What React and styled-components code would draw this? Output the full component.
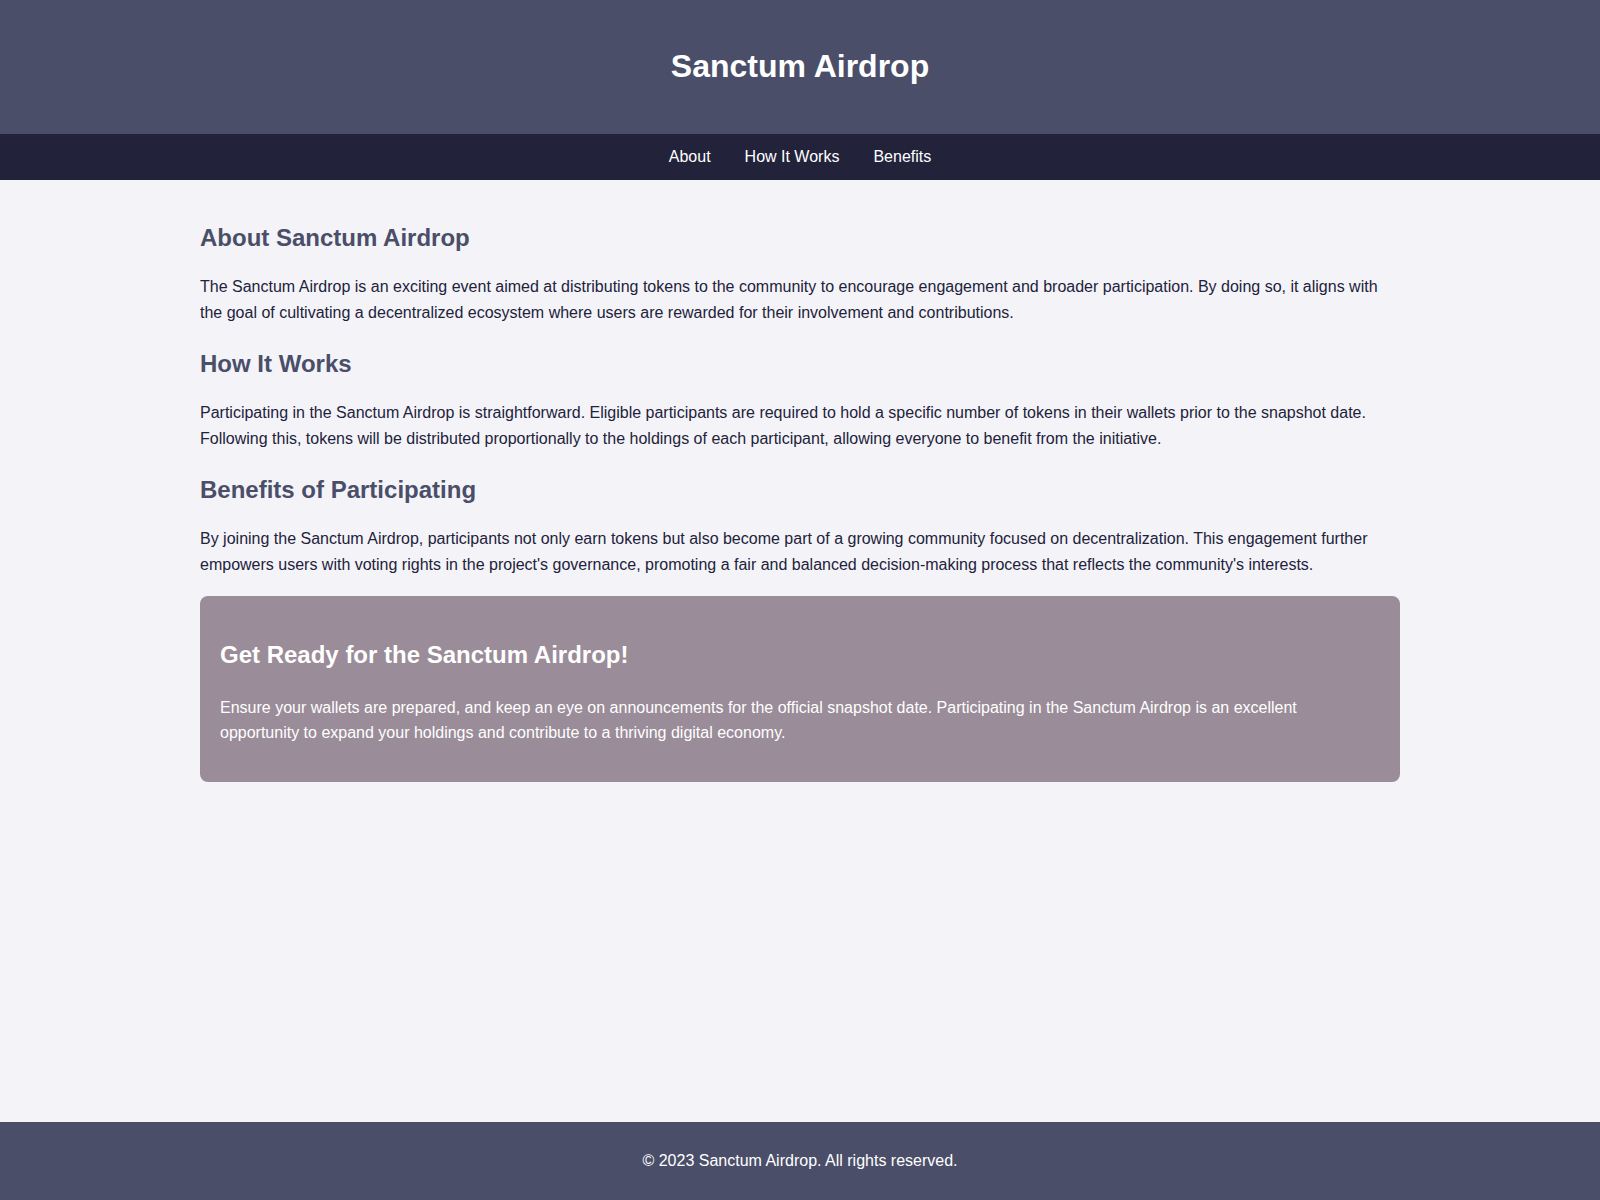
import React from "react";
import styled, { createGlobalStyle } from "styled-components";

const GlobalStyle = createGlobalStyle`
  * { box-sizing: border-box; }
  html, body { margin: 0; padding: 0; }
  body {
    background: #f4f4f8;
    color: #22223b;
    font-family: "Liberation Sans", Arial, sans-serif;
    font-size: 16px;
  }
`;

const Page = styled.div`
  min-height: 100vh;
  display: flex;
  flex-direction: column;
`;

const Header = styled.header`
  background: #4a4e69;
  height: 134px;
  padding-bottom: 2px;
  display: flex;
  align-items: center;
  justify-content: center;
`;

const Title = styled.h1`
  margin: 0;
  color: #ffffff;
  font-size: 32px;
  font-weight: bold;
  line-height: 1.15;
`;

const Nav = styled.nav`
  background: #22223b;
  height: 46px;
  display: flex;
  align-items: center;
  justify-content: center;
  gap: 34px;
`;

const NavLink = styled.a`
  color: #ffffff;
  text-decoration: none;
  font-size: 16px;
`;

const Main = styled.main`
  flex: 1;
  width: 100%;
  max-width: 1200px;
  margin: 0 auto;
  padding: 44px 0 40px;
`;

const Section = styled.section`
  margin-bottom: 25px;
  &:last-of-type { margin-bottom: 18px; }
`;

const Heading = styled.h2`
  margin: 0 0 22px;
  font-size: 24px;
  line-height: 28px;
  font-weight: bold;
  color: ${(p) => (p.$light ? "#ffffff" : "#4a4e69")};
`;

const Text = styled.p`
  margin: 0;
  font-size: 16px;
  line-height: 25.6px;
  color: ${(p) => (p.$light ? "#ffffff" : "#22223b")};
`;

const Callout = styled.div`
  background: #9a8c98;
  border-radius: 8px;
  padding: 45px 20px 36px;
  ${Heading} { margin-bottom: 26px; }
`;

const Footer = styled.footer`
  background: #4a4e69;
  height: 78px;
  display: flex;
  align-items: center;
  justify-content: center;
  color: #ffffff;
  font-size: 16px;
`;

const sections = [
  {
    id: "about",
    title: "About Sanctum Airdrop",
    body:
      "The Sanctum Airdrop is an exciting event aimed at distributing tokens to the community to encourage engagement and broader participation. By doing so, it aligns with the goal of cultivating a decentralized ecosystem where users are rewarded for their involvement and contributions.",
  },
  {
    id: "how",
    title: "How It Works",
    body:
      "Participating in the Sanctum Airdrop is straightforward. Eligible participants are required to hold a specific number of tokens in their wallets prior to the snapshot date. Following this, tokens will be distributed proportionally to the holdings of each participant, allowing everyone to benefit from the initiative.",
  },
  {
    id: "benefits",
    title: "Benefits of Participating",
    body:
      "By joining the Sanctum Airdrop, participants not only earn tokens but also become part of a growing community focused on decentralization. This engagement further empowers users with voting rights in the project's governance, promoting a fair and balanced decision-making process that reflects the community's interests.",
  },
];

export default function App() {
  return (
    <>
      <GlobalStyle />
      <Page>
        <Header>
          <Title>Sanctum Airdrop</Title>
        </Header>
        <Nav>
          <NavLink href="#about">About</NavLink>
          <NavLink href="#how">How It Works</NavLink>
          <NavLink href="#benefits">Benefits</NavLink>
        </Nav>
        <Main>
          {sections.map((s) => (
            <Section key={s.id} id={s.id}>
              <Heading>{s.title}</Heading>
              <Text>{s.body}</Text>
            </Section>
          ))}
          <Callout>
            <Heading $light>Get Ready for the Sanctum Airdrop!</Heading>
            <Text $light>
              Ensure your wallets are prepared, and keep an eye on announcements for the official snapshot date. Participating in the Sanctum Airdrop is an excellent opportunity to expand your holdings and contribute to a thriving digital economy.
            </Text>
          </Callout>
        </Main>
        <Footer>© 2023 Sanctum Airdrop. All rights reserved.</Footer>
      </Page>
    </>
  );
}
